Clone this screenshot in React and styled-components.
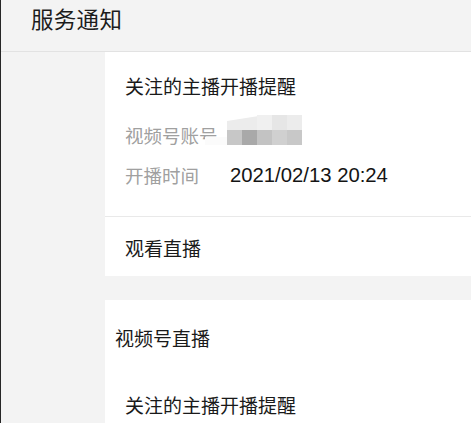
import React from "react";
import styled, { createGlobalStyle } from "styled-components";

const GlobalStyle = createGlobalStyle`
  html, body {
    margin: 0;
    padding: 0;
    background: #f3f3f3;
  }
  body {
    font-family: "Noto Sans CJK SC", "Noto Sans", sans-serif;
    -webkit-font-smoothing: antialiased;
  }
`;

const Page = styled.div`
  min-height: 100vh;
  border-left: 1px solid #262626;
  background: #f3f3f3;
  display: flex;
  flex-direction: column;
`;

const Header = styled.div`
  height: 51px;
  border-bottom: 1px solid #e2e2e2;
  padding-left: 30px;
  box-sizing: content-box;

  h1 {
    margin: 0;
    padding-top: 2px;
    font-size: 22.5px;
    line-height: 32px;
    font-weight: 400;
    color: #1c1c1c;
    letter-spacing: 0.3px;
  }
`;

const Feed = styled.div`
  flex: 1;
  padding-left: 104px;
  display: flex;
  flex-direction: column;
  gap: 24px;
`;

const Card = styled.div`
  background: #fff;
  display: flex;
  flex-direction: column;
  flex: ${(p) => (p.$fill ? 1 : "none")};
`;

const Text = styled.div`
  font-size: 19px;
  line-height: 26px;
  color: ${(p) => (p.$muted ? "#a0a0a0" : "#1a1a1a")};
  padding-left: ${(p) => p.$indent ?? 20}px;
  margin-top: ${(p) => p.$top ?? 0}px;
  white-space: nowrap;
`;

const Row = styled.div`
  display: flex;
  align-items: flex-start;
  padding-left: 20px;
  margin-top: ${(p) => p.$top}px;
`;

const Label = styled.div`
  width: 105px;
  flex-shrink: 0;
  font-size: 18.5px;
  line-height: 26px;
  color: #a0a0a0;
  white-space: nowrap;
`;

const Value = styled.div`
  font-family: "Liberation Sans", "Noto Sans CJK SC", sans-serif;
  font-size: 20.3px;
  line-height: 26px;
  color: #141414;
  white-space: nowrap;
`;

const Mosaic = styled.svg`
  display: block;
  margin: -7px 0 0 -25px;
  flex-shrink: 0;
`;

const Divider = styled.div`
  height: 1px;
  background: #e9e9e9;
  margin-top: ${(p) => p.$top}px;
`;

function Blur() {
  const cells = ["#c7c7c7", "#a9a9a9", "#c3c3c3", "#d0d0d0", "#c8c8c8"];
  return (
    <Mosaic width="97" height="30" viewBox="0 0 97 30">
      <rect x="0" y="22" width="22" height="8" fill="#fbfbfb" />
      <polygon points="22,6 60,0 97,0 97,15 22,15" fill="#ececec" />
      <rect x="52" y="0" width="15" height="15" fill="#f0f0f0" />
      <rect x="67" y="0" width="15" height="15" fill="#e6e6e6" />
      {cells.map((c, i) => (
        <rect key={i} x={22 + i * 15} y="15" width="15" height="15" fill={c} />
      ))}
    </Mosaic>
  );
}

export default function App() {
  return (
    <>
      <GlobalStyle />
      <Page>
        <Header>
          <h1>服务通知</h1>
        </Header>
        <Feed>
          <Card>
            <Text $top={21}>关注的主播开播提醒</Text>
            <Row $top={23}>
              <Label>视频号账号</Label>
              <Blur />
            </Row>
            <Row $top={14}>
              <Label>开播时间</Label>
              <Value>2021/02/13 20:24</Value>
            </Row>
            <Divider $top={28} />
            <Text $top={18} style={{ paddingBottom: 15 }}>
              观看直播
            </Text>
          </Card>
          <Card $fill>
            <Text $indent={10} $top={25}>
              视频号直播
            </Text>
            <Text $top={41}>关注的主播开播提醒</Text>
          </Card>
        </Feed>
      </Page>
    </>
  );
}
